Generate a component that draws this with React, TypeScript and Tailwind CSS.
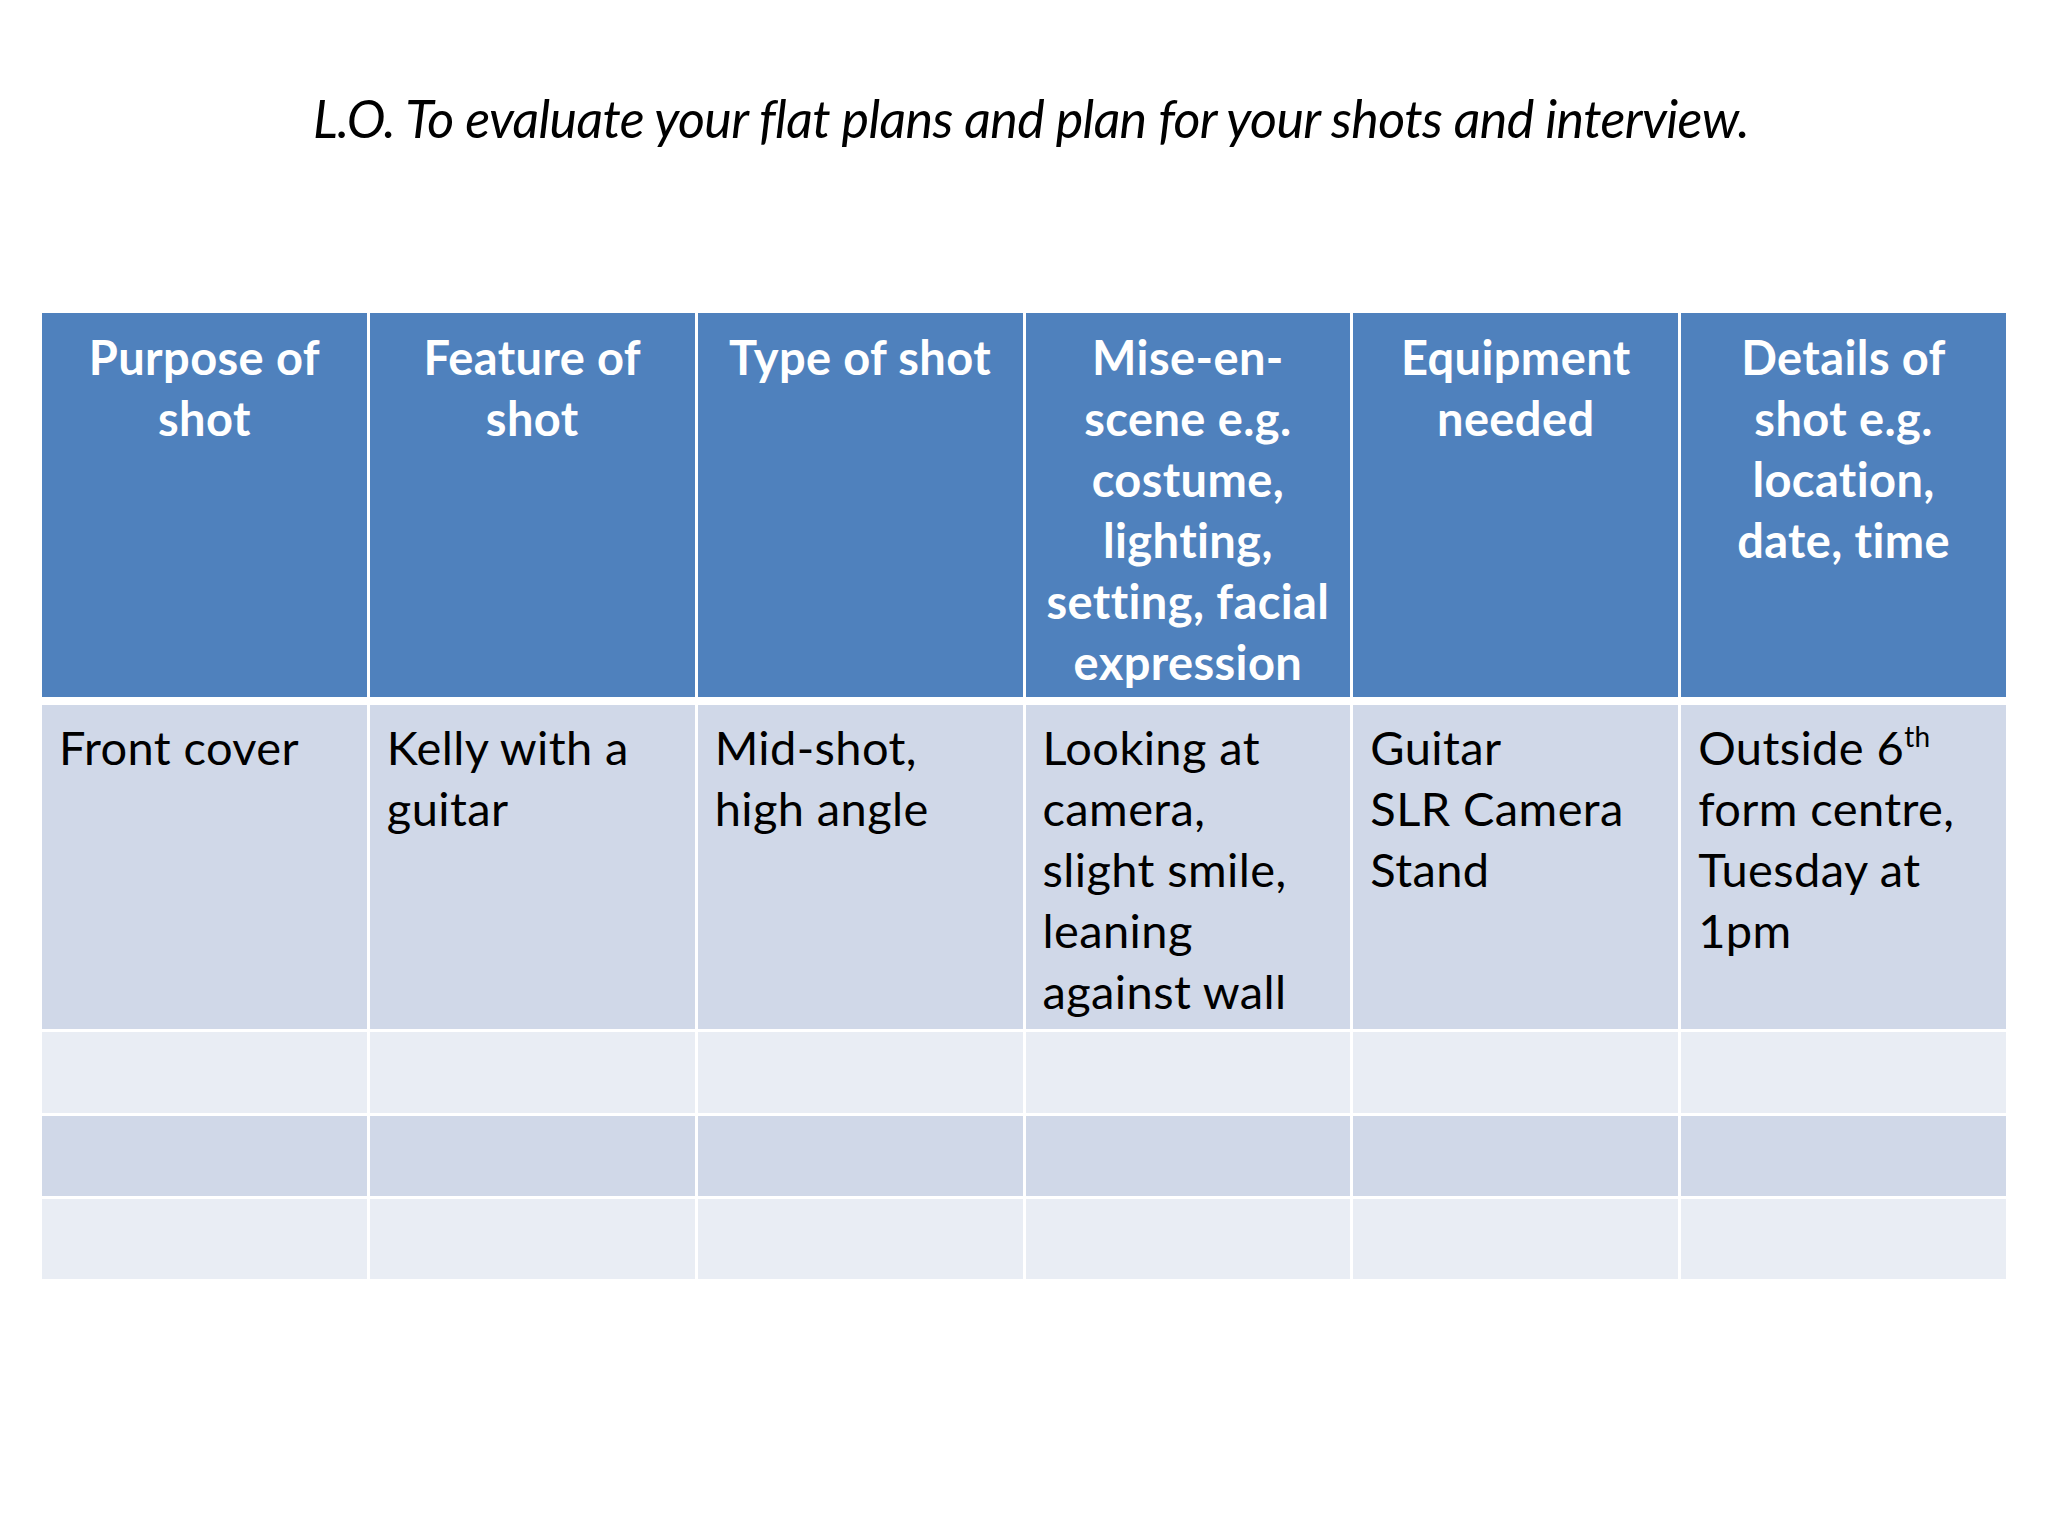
import * as React from "react";

const headers: string[][] = [
  ["Purpose of", "shot"],
  ["Feature of", "shot"],
  ["Type of shot"],
  ["Mise-en-", "scene e.g.", "costume,", "lighting,", "setting, facial", "expression"],
  ["Equipment", "needed"],
  ["Details of", "shot e.g.", "location,", "date, time"],
];

const Lines: React.FC<{ lines: React.ReactNode[] }> = ({ lines }) => (
  <>
    {lines.map((l, i) => (
      <div key={i} className="whitespace-nowrap">
        {l}
      </div>
    ))}
  </>
);

export default function App(): React.ReactElement {
  const bodyCell = "bg-[#d0d8e8] pl-[17px] pt-[12px] text-black";
  const body: React.ReactNode[][] = [
    ["Front cover"],
    ["Kelly with a", "guitar"],
    ["Mid-shot,", "high angle"],
    ["Looking at", "camera,", "slight smile,", "leaning", "against wall"],
    ["Guitar", "SLR Camera", "Stand"],
    [
      <>
        Outside 6<sup className="text-[28px] top-[-0.65em]">th</sup>
      </>,
      "form centre,",
      "Tuesday at",
      "1pm",
    ],
  ];

  return (
    <div className="w-[2048px] h-[1536px] bg-white font-['Lato',_sans-serif]">
      <h1 className="pt-[87px] pl-[14px] text-center text-[52px] leading-[1.2] tracking-[-0.6px] italic font-normal text-black">
        L.O. To evaluate your flat plans and plan for your shots and interview.
      </h1>

      <div className="mx-[42px] mt-[164px] flex flex-col text-[47px] leading-[61px] tracking-[0.4px]">
        <div className="grid grid-cols-6 gap-x-[3px] h-[384px]">
          {headers.map((h, i) => (
            <div key={i} className="bg-[#4f81bd] pt-[14px] text-center font-bold text-white">
              <Lines lines={h} />
            </div>
          ))}
        </div>

        <div className="mt-[8px] grid grid-cols-6 gap-x-[3px] h-[324px]">
          {body.map((c, i) => (
            <div key={i} className={bodyCell}>
              <Lines lines={c} />
            </div>
          ))}
        </div>

        <div className="mt-[3px] grid grid-cols-6 gap-x-[3px] h-[81px]">
          {headers.map((_, i) => (
            <div key={i} className="bg-[#e9edf4]" />
          ))}
        </div>
        <div className="mt-[3px] grid grid-cols-6 gap-x-[3px] h-[80px]">
          {headers.map((_, i) => (
            <div key={i} className="bg-[#d0d8e8]" />
          ))}
        </div>
        <div className="mt-[3px] grid grid-cols-6 gap-x-[3px] h-[80px]">
          {headers.map((_, i) => (
            <div key={i} className="bg-[#e9edf4]" />
          ))}
        </div>
      </div>
    </div>
  );
}
